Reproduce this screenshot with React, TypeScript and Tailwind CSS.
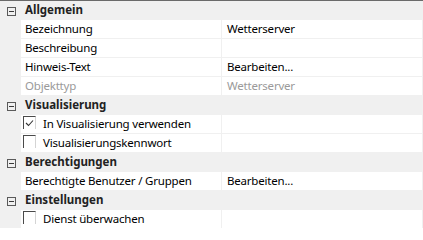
import React from "react";

type Row =
  | { kind: "header"; label: string }
  | { kind: "prop"; label: string; value?: string; muted?: boolean }
  | { kind: "check"; label: string; checked: boolean };

const rows: Row[] = [
  { kind: "header", label: "Allgemein" },
  { kind: "prop", label: "Bezeichnung", value: "Wetterserver" },
  { kind: "prop", label: "Beschreibung" },
  { kind: "prop", label: "Hinweis-Text", value: "Bearbeiten..." },
  { kind: "prop", label: "Objekttyp", value: "Wetterserver", muted: true },
  { kind: "header", label: "Visualisierung" },
  { kind: "check", label: "In Visualisierung verwenden", checked: true },
  { kind: "check", label: "Visualisierungskennwort", checked: false },
  { kind: "header", label: "Berechtigungen" },
  { kind: "prop", label: "Berechtigte Benutzer / Gruppen", value: "Bearbeiten..." },
  { kind: "header", label: "Einstellungen" },
  { kind: "check", label: "Dienst überwachen", checked: false },
];

function MinusBox() {
  return (
    <svg width="9" height="9" viewBox="0 0 9 9" className="block">
      <rect x="0.5" y="0.5" width="8" height="8" fill="none" stroke="#5a5a5a" />
      <line x1="2" y1="4.5" x2="7" y2="4.5" stroke="#3a3a3a" />
    </svg>
  );
}

function CheckBox({ checked }: { checked: boolean }) {
  return (
    <div className="w-[13px] h-[13px] mt-px border-t border-l border-r border-t-[#4a4a4a] border-l-[#4a4a4a] border-r-[#d4d4d4] bg-white flex items-center justify-center shrink-0">
      {checked && (
        <svg width="9" height="8" viewBox="0 0 9 8" className="block">
          <polyline points="1,4 3.5,6.5 8,1.5" fill="none" stroke="#333" strokeWidth="1.1" />
        </svg>
      )}
    </div>
  );
}

export default function App() {
  return (
    <div
      className="w-[423px] h-[228px] overflow-hidden bg-[#f0f0f0] border-t border-[#6a6a6a] text-[11.5px] leading-[18px]"
      style={{ fontFamily: '"Noto Sans", "Open Sans", sans-serif' }}
    >
      {rows.map((r, i) => {
        if (r.kind === "header") {
          return (
            <div key={i} className="flex h-[19px]">
              <div className="w-[21px] flex items-start pl-[7px] pt-[6px]">
                <MinusBox />
              </div>
              <div className="pl-[4px] h-[18px] font-bold text-[#222]">{r.label}</div>
            </div>
          );
        }
        return (
          <div key={i} className="flex h-[19px] tracking-[-0.2px]">
            <div className="w-[21px]" />
            <div className="w-[200px] h-[18px] bg-white flex items-start overflow-hidden whitespace-nowrap">
              {r.kind === "check" ? (
                <div className="flex items-start pl-[2px]">
                  <CheckBox checked={r.checked} />
                  <span className="ml-[7px] text-black">{r.label}</span>
                </div>
              ) : (
                <span className={`pl-[4px] ${r.muted ? "text-[#9a9a9a]" : "text-black"}`}>{r.label}</span>
              )}
            </div>
            <div className="w-px h-[18px]" />
            <div className="w-[200px] h-[18px] bg-white whitespace-nowrap overflow-hidden">
              {r.kind === "prop" && r.value && (
                <span className={`pl-[5px] ${r.muted ? "text-[#9a9a9a]" : "text-black"}`}>{r.value}</span>
              )}
            </div>
          </div>
        );
      })}
    </div>
  );
}
